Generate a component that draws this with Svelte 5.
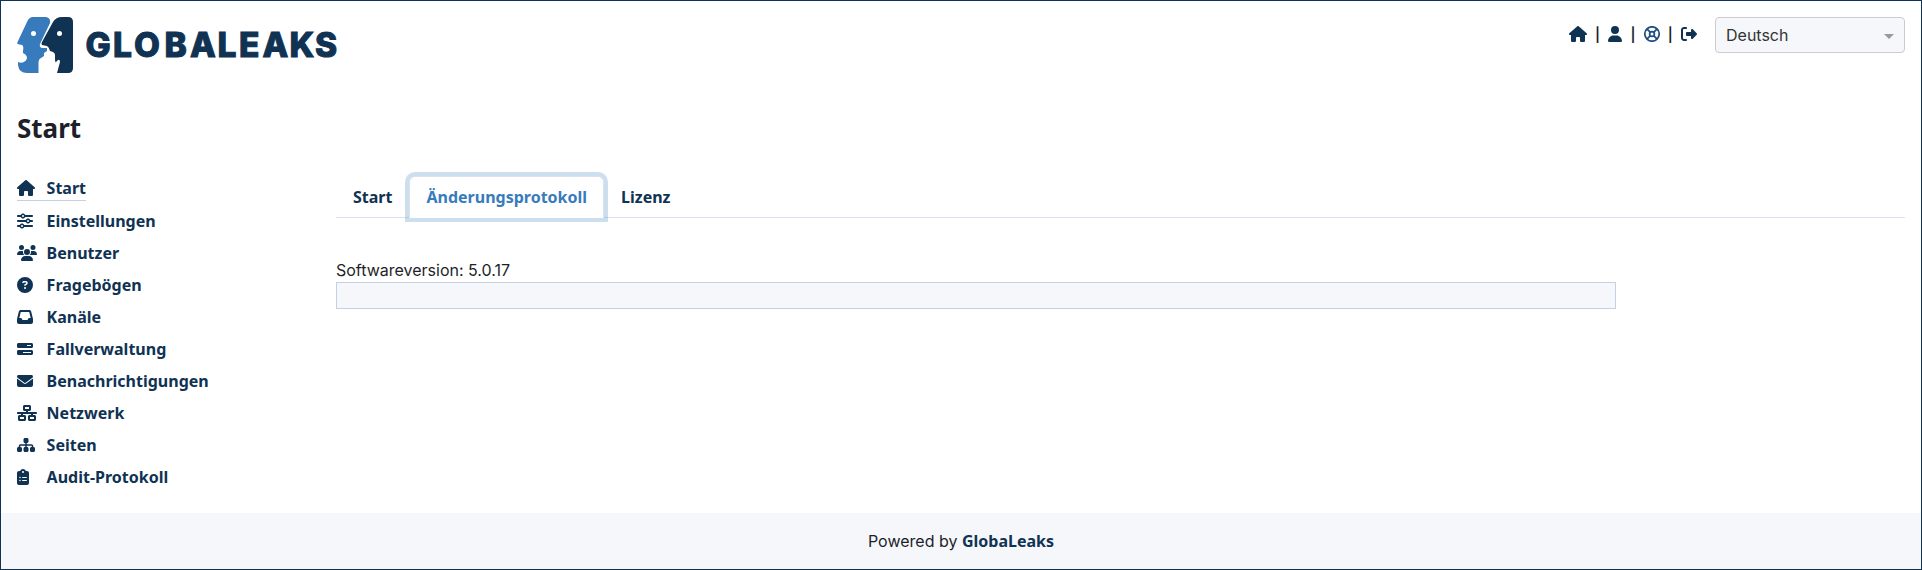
<script>
  const icons = {
    house: [576, 'M575.8 255.5c0 18-15 32.1-32 32.1h-32l.7 160.2c0 2.7-.2 5.4-.5 8.1V472c0 22.1-17.9 40-40 40H456c-1.1 0-2.2 0-3.3-.1c-1.4 .1-2.8 .1-4.2 .1H416 392c-22.1 0-40-17.9-40-40V448 384c0-17.7-14.3-32-32-32H256c-17.7 0-32 14.3-32 32v64 24c0 22.1-17.9 40-40 40H160 128.1c-1.5 0-3-.1-4.5-.2c-1.2 .1-2.4 .2-3.6 .2H104c-22.1 0-40-17.9-40-40V360c0-.9 0-1.9 .1-2.8V287.6H32c-18 0-32-14-32-32.1c0-9 3-17 10-24L266.4 8c7-7 15-8 22-8s15 2 21 7L564.8 231.5c8 7 12 15 11 24z'],
    user: [448, 'M224 256A128 128 0 1 0 224 0a128 128 0 1 0 0 256zm-45.7 48C79.8 304 0 383.8 0 482.3C0 498.7 13.3 512 29.7 512H418.3c16.4 0 29.7-13.3 29.7-29.7C448 383.8 368.2 304 269.7 304H178.3z'],
    logout: [512, 'M377.9 105.9L500.7 228.7c7.2 7.2 11.3 17.1 11.3 27.3s-4.1 20.1-11.3 27.3L377.9 406.1c-6.4 6.4-15 9.9-24 9.9c-18.7 0-33.9-15.2-33.9-33.9l0-62.1-128 0c-17.7 0-32-14.3-32-32l0-64c0-17.7 14.3-32 32-32l128 0 0-62.1c0-18.7 15.2-33.9 33.9-33.9c9 0 17.6 3.6 24 9.9zM160 96L96 96c-17.7 0-32 14.3-32 32l0 256c0 17.7 14.3 32 32 32l64 0c17.7 0 32 14.3 32 32s-14.3 32-32 32l-64 0c-53 0-96-43-96-96L0 128C0 75 43 32 96 32l64 0c17.7 0 32 14.3 32 32s-14.3 32-32 32z'],
    sliders: [512, 'M0 416c0 17.7 14.3 32 32 32l54.7 0c12.3 28.3 40.5 48 73.3 48s61-19.7 73.3-48L480 448c17.7 0 32-14.3 32-32s-14.3-32-32-32l-246.7 0c-12.3-28.3-40.5-48-73.3-48s-61 19.7-73.3 48L32 384c-17.7 0-32 14.3-32 32zm128 0a32 32 0 1 1 64 0 32 32 0 1 1 -64 0zM320 256a32 32 0 1 1 64 0 32 32 0 1 1 -64 0zm32-80c-32.8 0-61 19.7-73.3 48L32 224c-17.7 0-32 14.3-32 32s14.3 32 32 32l246.7 0c12.3 28.3 40.5 48 73.3 48s61-19.7 73.3-48l54.7 0c17.7 0 32-14.3 32-32s-14.3-32-32-32l-54.7 0c-12.3-28.3-40.5-48-73.3-48zM192 128a32 32 0 1 1 0-64 32 32 0 1 1 0 64zm73.3-64C253 35.7 224.8 16 192 16s-61 19.7-73.3 48L32 64C14.3 64 0 78.3 0 96s14.3 32 32 32l86.7 0c12.3 28.3 40.5 48 73.3 48s61-19.7 73.3-48L480 128c17.7 0 32-14.3 32-32s-14.3-32-32-32L265.3 64z'],
    users: [640, 'M144 0a80 80 0 1 1 0 160A80 80 0 1 1 144 0zM512 0a80 80 0 1 1 0 160A80 80 0 1 1 512 0zM0 298.7C0 239.8 47.8 192 106.7 192h42.7c15.9 0 31 3.5 44.6 9.7c-1.3 7.2-1.9 14.7-1.9 22.3c0 38.2 16.8 72.5 43.3 96c-.2 0-.4 0-.7 0H21.3C9.6 320 0 310.4 0 298.7zM405.3 320c-.2 0-.4 0-.7 0c26.6-23.5 43.3-57.8 43.3-96c0-7.6-.7-15-1.9-22.3c13.6-6.3 28.7-9.7 44.6-9.7h42.7C592.2 192 640 239.8 640 298.7c0 11.8-9.6 21.3-21.3 21.3H405.3zM224 224a96 96 0 1 1 192 0 96 96 0 1 1 -192 0zM128 485.3C128 411.7 187.7 352 261.3 352H378.7C452.3 352 512 411.7 512 485.3c0 14.7-11.9 26.7-26.7 26.7H154.7c-14.7 0-26.7-11.9-26.7-26.7z'],
    question: [512, 'M256 512A256 256 0 1 0 256 0a256 256 0 1 0 0 512zM169.8 165.3c7.9-22.3 29.1-37.3 52.8-37.3h58.3c34.9 0 63.1 28.3 63.1 63.1c0 22.6-12.1 43.5-31.7 54.8L280 264.4c-.2 13-10.9 23.6-24 23.6c-13.3 0-24-10.7-24-24V250.5c0-8.6 4.6-16.5 12.1-20.8l44.3-25.4c4.7-2.7 7.6-7.7 7.6-13.1c0-8.4-6.8-15.1-15.1-15.1H222.6c-3.4 0-6.4 2.1-7.5 5.3l-.4 1.2c-4.4 12.5-18.2 19-30.6 14.6s-19-18.2-14.6-30.6l.4-1.2zM224 352a32 32 0 1 1 64 0 32 32 0 1 1 -64 0z'],
    inbox: [512, 'M121 32C91.6 32 66 52 58.9 80.5L1.9 308.4C.6 313.5 0 318.7 0 323.9V416c0 35.3 28.7 64 64 64H448c35.3 0 64-28.7 64-64V323.9c0-5.2-.6-10.4-1.9-15.5l-57-227.9C446 52 420.4 32 391 32H121zm0 64H391l48 192H387.8c-12.1 0-23.2 6.8-28.6 17.7l-14.3 28.6c-5.4 10.8-16.5 17.7-28.6 17.7H195.8c-12.1 0-23.2-6.8-28.6-17.7l-14.3-28.6c-5.4-10.8-16.5-17.7-28.6-17.7H73L121 96z'],
    bars: [512, 'M448 160H320V128H448v32zM48 64C21.5 64 0 85.5 0 112v64c0 26.5 21.5 48 48 48H464c26.5 0 48-21.5 48-48V112c0-26.5-21.5-48-48-48H48zM448 352v32H192V352H448zM48 288c-26.5 0-48 21.5-48 48v64c0 26.5 21.5 48 48 48H464c26.5 0 48-21.5 48-48V336c0-26.5-21.5-48-48-48H48z'],
    envelope: [512, 'M48 64C21.5 64 0 85.5 0 112c0 15.1 7.1 29.3 19.2 38.4L236.8 313.6c11.4 8.5 27 8.5 38.4 0L492.8 150.4c12.1-9.1 19.2-23.3 19.2-38.4c0-26.5-21.5-48-48-48H48zM0 176V384c0 35.3 28.7 64 64 64H448c35.3 0 64-28.7 64-64V176L294.4 339.2c-22.8 17.1-54 17.1-76.8 0L0 176z'],
    network: [640, 'M256 64H384v64H256V64zM240 0c-26.5 0-48 21.5-48 48v96c0 26.5 21.5 48 48 48h48v32H32c-17.7 0-32 14.3-32 32s14.3 32 32 32h96v32H80c-26.5 0-48 21.5-48 48v96c0 26.5 21.5 48 48 48H240c26.5 0 48-21.5 48-48V368c0-26.5-21.5-48-48-48H192V288H448v32H400c-26.5 0-48 21.5-48 48v96c0 26.5 21.5 48 48 48H560c26.5 0 48-21.5 48-48V368c0-26.5-21.5-48-48-48H512V288h96c17.7 0 32-14.3 32-32s-14.3-32-32-32H352V192h48c26.5 0 48-21.5 48-48V48c0-26.5-21.5-48-48-48H240zM96 448V384H224v64H96zm320-64H544v64H416V384z'],
    sitemap: [576, 'M208 80c0-26.5 21.5-48 48-48h64c26.5 0 48 21.5 48 48v64c0 26.5-21.5 48-48 48h-8v40H464c30.9 0 56 25.1 56 56v32h8c26.5 0 48 21.5 48 48v64c0 26.5-21.5 48-48 48H464c-26.5 0-48-21.5-48-48V368c0-26.5 21.5-48 48-48h8V288c0-4.4-3.6-8-8-8H312v40h8c26.5 0 48 21.5 48 48v64c0 26.5-21.5 48-48 48H256c-26.5 0-48-21.5-48-48V368c0-26.5 21.5-48 48-48h8V280H112c-4.4 0-8 3.6-8 8v32h8c26.5 0 48 21.5 48 48v64c0 26.5-21.5 48-48 48H48c-26.5 0-48-21.5-48-48V368c0-26.5 21.5-48 48-48h8V288c0-30.9 25.1-56 56-56H264V192h-8c-26.5 0-48-21.5-48-48V80z'],
    clipboard: [384, 'M192 0c-41.8 0-77.4 26.7-90.5 64H64C28.7 64 0 92.7 0 128V448c0 35.3 28.7 64 64 64H320c35.3 0 64-28.7 64-64V128c0-35.3-28.7-64-64-64H282.5C269.4 26.7 233.8 0 192 0zm0 64a32 32 0 1 1 0 64 32 32 0 1 1 0-64zM72 272a24 24 0 1 1 48 0 24 24 0 1 1 -48 0zm104-16H304c8.8 0 16 7.2 16 16s-7.2 16-16 16H176c-8.8 0-16-7.2-16-16s7.2-16 16-16zM72 368a24 24 0 1 1 48 0 24 24 0 1 1 -48 0zm88 0c0-8.8 7.2-16 16-16H304c8.8 0 16 7.2 16 16s-7.2 16-16 16H176c-8.8 0-16-7.2-16-16z']
  };

  const menu = [
    ['house', 'Start'],
    ['sliders', 'Einstellungen'],
    ['users', 'Benutzer'],
    ['question', 'Fragebögen'],
    ['inbox', 'Kanäle'],
    ['bars', 'Fallverwaltung'],
    ['envelope', 'Benachrichtigungen'],
    ['network', 'Netzwerk'],
    ['sitemap', 'Seiten'],
    ['clipboard', 'Audit-Protokoll']
  ];
  const tabs = ['Start', 'Änderungsprotokoll', 'Lizenz'];
  let activeMenu = $state(0);
  let activeTab = $state(1);
</script>

{#snippet icon(name)}
  <svg class="icon" viewBox="0 0 {icons[name][0]} 512" width={icons[name][0] / 32} height="16" aria-hidden="true">
    <path fill-rule="evenodd" d={icons[name][1]} />
  </svg>
{/snippet}

<div class="page">
  <header>
    <svg class="logo" viewBox="0 0 324 56" width="324" height="56">
      <path fill="#377bbc" d="M16 0H29Q34 1 33 6L23 27Q22 30 25 31H30V34L27 36V39L24 41Q21.500 42 21.500 46V56H10Q2 56 1 48V45Q5 47 9 43.500Q12 39 6 36V34Q7 29 5 28L.3 27Q0 26 1 24L10 5Q12 0 16 0Z" />
      <path fill="#103253" d="M45 0H51Q56 0 56 5V51Q56 56 51 56H40L43 45Q43 42 41 43L39 45Q38 46 38 42V38Q38 36 36 35L33 34Q32 30 30 29L25 28Q24 27 25 25L36 5Q39 0 45 0Z" />
      <circle cx="16.500" cy="16.500" r="2.500" fill="#fff" />
      <circle cx="42.500" cy="16.500" r="2.500" fill="#fff" />
      <text class="wordmark" y="39.500" x="68.500 96 117 147.500 173 200.500 222 245.500 272.500 298">GLOBALEAKS</text>
    </svg>
    <div class="tools">
      <nav class="quick">
        {@render icon('house')}
        <span>|</span>
        {@render icon('user')}
        <span>|</span>
        <svg class="ring" viewBox="0 0 512 512" width="16" height="16">
          <g fill="none" stroke="currentColor" stroke-width="56">
            <circle cx="256" cy="256" r="230" />
            <circle cx="256" cy="256" r="76" />
            <path d="M92 92l113 113M420 92L307 205M92 420l113-113M420 420L307 307" />
          </g>
        </svg>
        <span>|</span>
        {@render icon('logout')}
      </nav>
      <div class="select"><span>Deutsch</span><i></i></div>
    </div>
  </header>

  <h1>Start</h1>

  <main>
    <ul class="menu">
      {#each menu as [name, label], i}
        <li>
          <button class:active={activeMenu === i} onclick={() => (activeMenu = i)}>
            <span class="slot">{@render icon(name)}</span>{label}
          </button>
        </li>
      {/each}
    </ul>
    <section>
      <div class="tabs">
        {#each tabs as tab, i}
          <button class:active={activeTab === i} onclick={() => (activeTab = i)}>{tab}</button>
        {/each}
      </div>
      <p>Softwareversion: 5.0.17</p>
      <div class="log"></div>
    </section>
  </main>

  <footer>Powered by&nbsp;<b>GlobaLeaks</b></footer>
</div>

<style>
  :global(body) { margin: 0; background: #fff; }
  .page, .page * { box-sizing: border-box; }
  .page {
    height: 570px;
    border: 1px solid #103253;
    display: flex;
    flex-direction: column;
    font: 16px/24px Inter, sans-serif;
    color: #1d1f2a;
    overflow: hidden;
  }
  button {
    font: 700 16px/24px "Noto Sans", sans-serif;
    color: #103253;
    background: none;
    border: 0;
    padding: 0;
    outline: none;
  }
  header {
    display: flex;
    justify-content: space-between;
    align-items: flex-start;
    padding: 16px 16px 0;
  }
  .logo { display: block; }
  .wordmark {
    font: 800 33.500px Inter, sans-serif;
    fill: #103253;
    stroke: #103253;
    stroke-width: 1px;
  }
  .tools { display: flex; gap: 18px; }
  .quick { display: flex; height: 34px; align-items: center; }
  .quick span {
    width: 21.400px;
    text-align: center;
    font-size: 14px;
    font-weight: 600;
    padding-top: 2px;
  }
  .icon { display: block; fill: #103253; flex: none; }
  .ring { display: block; color: #205081; }
  .select {
    width: 190px;
    height: 36px;
    padding: 0 10px;
    border: 1px solid #ccc;
    border-radius: 4px;
    background: #f5f7fb;
    color: #333;
    display: flex;
    align-items: center;
    justify-content: space-between;
  }
  .select i { border: 5px solid transparent; border-top-color: #999; border-bottom: 0; margin-top: 2px; }
  h1 {
    margin: 37px 16px 0;
    font: 700 26px/36px "Noto Sans", sans-serif;
  }
  main { flex: 1; display: flex; padding: 26px 16px 0; }
  .menu { width: 319px; margin: 0; padding: 0; list-style: none; }
  .menu li { height: 32px; padding-top: 4px; display: flex; }
  .menu li:first-child { height: 33px; }
  .menu button { display: flex; align-items: center; height: 24px; }
  .menu button.active { height: 25px; border-bottom: 1px solid #c5d0e2; }
  .slot { width: 29.600px; flex: none; }
  section { flex: 1; }
  .tabs { display: flex; margin-top: 4px; height: 42px; border-bottom: 1px solid #dbe2ee; }
  .tabs button { height: 42px; padding: 0 17px; }
  .tabs .active {
    color: #377bbc;
    background: #fff;
    border: 1px solid #dbe2ee;
    border-bottom-color: #fff;
    border-radius: 6px 6px 0 0;
    padding: 0 16px;
    box-shadow: 0 0 0 4px rgba(55, 123, 188, 0.25);
  }
  p { margin: 40px 0 0; }
  .log { width: 1280px; height: 27px; border: 1px solid #c5d0e2; background: #f5f7fb; }
  footer {
    height: 56px;
    background: #f5f7fb;
    display: flex;
    align-items: center;
    justify-content: center;
  }
  footer b { font-family: "Noto Sans", sans-serif; color: #103253; }
</style>
